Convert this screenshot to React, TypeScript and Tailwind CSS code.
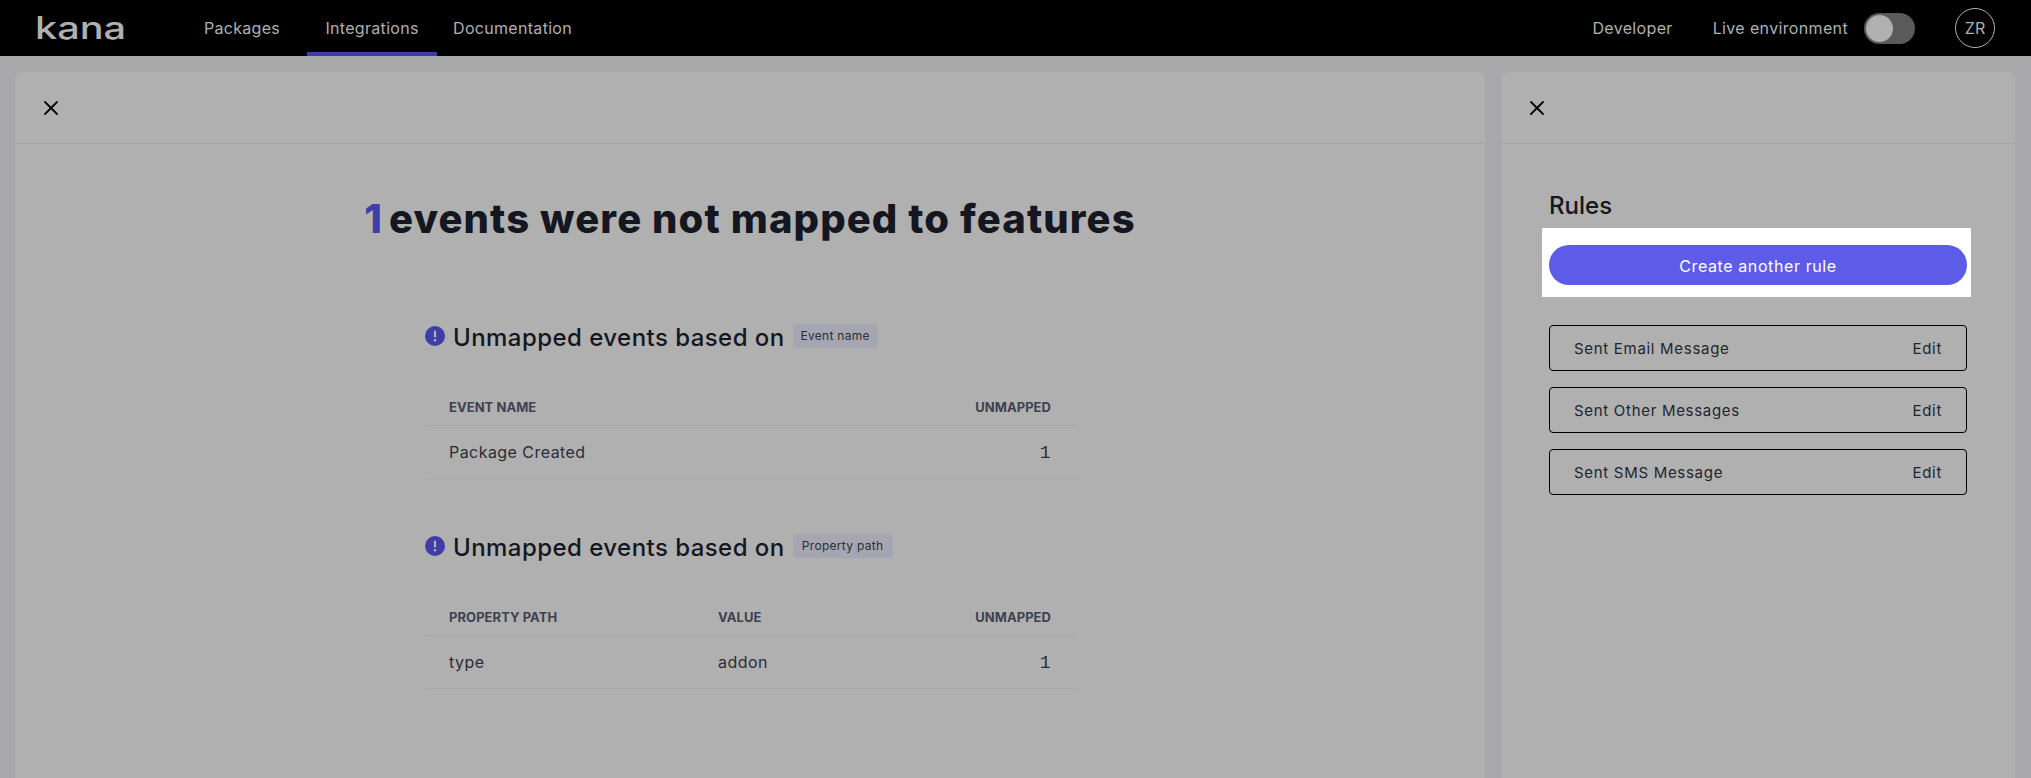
import { X } from "lucide-react";

const RULES = ["Sent Email Message", "Sent Other Messages", "Sent SMS Message"];

function AlertDot() {
  return (
    <svg viewBox="0 0 20 20" className="h-5 w-5 shrink-0">
      <circle cx="10" cy="10" r="10" fill="#3f3da8" />
      <rect x="8.9" y="4.5" width="2.2" height="7" rx="1.1" fill="#b0b0b0" />
      <circle cx="10" cy="14.2" r="1.3" fill="#b0b0b0" />
    </svg>
  );
}

function SectionTitle({ badge, badgeWidth }: { badge: string; badgeWidth: string }) {
  return (
    <div className="flex h-6 items-center">
      <AlertDot />
      <h2 className="ml-2 whitespace-nowrap text-[24px] font-medium leading-6 tracking-[0.45px] text-[#14171f] translate-y-[2px]">
        Unmapped events based on
      </h2>
      <span className={`ml-2 flex h-6 items-center justify-center rounded bg-[#a6a6b2] text-[12px] tracking-[0.3px] text-[#2b2e3a] ${badgeWidth}`}>
        {badge}
      </span>
    </div>
  );
}

function HeadCell({ children, className = "" }: { children: string; className?: string }) {
  return <span className={`text-[13px] font-bold uppercase tracking-[0.05px] text-[#3e4250] ${className}`}>{children}</span>;
}

export default function App() {
  return (
    <div className="flex h-screen flex-col overflow-hidden bg-[#a8a8aa] font-['Inter',sans-serif]">
      <header className="flex h-14 shrink-0 items-center bg-black text-[#b0b0b0]">
        <div className="ml-[35px] w-[169px] origin-left scale-x-[1.28] text-[31px] font-medium leading-none -translate-y-px">kana</div>
        <nav className="flex h-full items-center text-[16px]">
          <a className="tracking-[0.3px]">Packages</a>
          <a className="ml-[27px] flex h-full w-[130px] items-center justify-center border-b-4 border-[#3f3da8] pt-1 tracking-[0.3px]">Integrations</a>
          <a className="ml-4 tracking-[0.3px]">Documentation</a>
        </nav>
        <div className="ml-auto flex items-center text-[16px] tracking-[0.35px]">
          <span>Developer</span>
          <span className="ml-10">Live environment</span>
          <span className="ml-4 flex h-[31px] w-[51px] items-center rounded-full bg-[#5a5a5a] pl-[2px]">
            <span className="h-[27px] w-[27px] rounded-full bg-[#b0b0b0]" />
          </span>
          <span className="ml-10 mr-9 flex h-10 w-10 items-center justify-center rounded-full border border-[#b0b0b0] tracking-normal">ZR</span>
        </div>
      </header>

      <main className="flex min-h-0 flex-1 gap-4 pl-[15px] pr-4 pt-4">
        <section className="flex-1 rounded-t-lg bg-[#b0b0b0]">
          <div className="flex h-[72px] items-center border-b border-[#a5a5a5] pl-6">
            <X className="h-6 w-6 text-black" strokeWidth={1.8} />
          </div>
          <div className="flex flex-col items-center pt-[53px]">
            <h1 className="flex gap-[6px] whitespace-nowrap text-[40px] font-extrabold leading-[44px] tracking-[1.1px] text-[#14171f]">
              <span className="text-[#3f3da8]">1</span>
              <span>events were not mapped to features</span>
            </h1>
            <div className="mt-[83px] w-[650px]">
              <SectionTitle badge="Event name" badgeWidth="w-[85px]" />
              <div className="mt-[50px] flex h-[28px] items-start justify-between border-b border-[#a5a5a5] px-6">
                <HeadCell>Event name</HeadCell>
                <HeadCell>Unmapped</HeadCell>
              </div>
              <div className="flex h-[53px] items-center justify-between border-b border-[#a8a8a8] px-6 text-[16px] tracking-[0.45px] text-[#2a2d35]">
                <span>Package Created</span>
                <span className="pt-[3px] font-['Liberation_Mono',monospace] text-[18px]">1</span>
              </div>
            </div>
            <div className="mt-[55px] w-[650px]">
              <SectionTitle badge="Property path" badgeWidth="w-[100px]" />
              <div className="mt-[50px] grid h-[28px] grid-cols-[269px_1fr_auto] items-start border-b border-[#a5a5a5] px-6">
                <HeadCell>Property path</HeadCell>
                <HeadCell>Value</HeadCell>
                <HeadCell>Unmapped</HeadCell>
              </div>
              <div className="grid h-[53px] grid-cols-[269px_1fr_auto] items-center border-b border-[#a8a8a8] px-6 text-[16px] tracking-[0.45px] text-[#2a2d35]">
                <span>type</span>
                <span>addon</span>
                <span className="pt-[3px] font-['Liberation_Mono',monospace] text-[18px]">1</span>
              </div>
            </div>
          </div>
        </section>

        <aside className="w-[514px] shrink-0 rounded-t-lg bg-[#b0b0b0]">
          <div className="flex h-[72px] items-center border-b border-[#a5a5a5] pl-6">
            <X className="h-6 w-6 text-black" strokeWidth={1.8} />
          </div>
          <div className="px-12 pt-[47px]">
            <h3 className="text-[24px] font-medium leading-[30px] text-[#14171f]">Rules</h3>
            <div className="-ml-[7px] -mr-1 mt-[7px] bg-white pb-3 pl-[7px] pr-1 pt-[17px]">
              <button className="h-10 w-full rounded-full bg-[#5c5ce8] pt-[2px] text-[16px] tracking-[0.6px] text-white">
                Create another rule
              </button>
            </div>
            <div className="mt-7 flex flex-col gap-4">
              {RULES.map((r) => (
                <div
                  key={r}
                  className="flex h-[46px] items-center justify-between rounded border border-black px-6 pt-[2px] text-[15px] tracking-[0.7px] text-[#22252d]"
                >
                  <span>{r}</span>
                  <span>Edit</span>
                </div>
              ))}
            </div>
          </div>
        </aside>
      </main>
    </div>
  );
}
